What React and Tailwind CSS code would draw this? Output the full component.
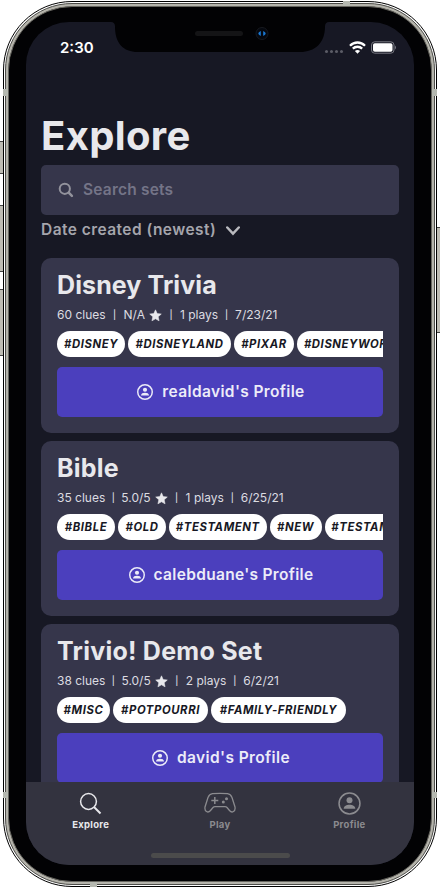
import React from "react";

const star = "M12 1.500l3.100 7 7.600.8-5.700 5.100 1.600 7.500L12 18.100l-6.600 3.800 1.600-7.500L1.300 9.300l7.600-.8z";

function Star() {
  return (
    <svg className="ml-1 mr-[3px] h-[13px] w-[13px] shrink-0" viewBox="0 0 24 24" fill="#e8e8ec" stroke="#e8e8ec" strokeWidth="1">
      <path d={star} />
    </svg>
  );
}

function UserCircle({ className, thin }) {
  return (
    <svg className={className} viewBox="0 0 24 24" fill="none" stroke="currentColor">
      <circle cx="12" cy="12" r="10.900" strokeWidth={thin ? 1.6 : 2.2} />
      <circle cx="12" cy="8.700" r="3.100" fill="currentColor" stroke="none" />
      <path d="M5.900 17.400c.3-3 3-4.100 6.100-4.100s5.800 1.100 6.100 4.100z" fill="currentColor" stroke="none" />
    </svg>
  );
}

function Card({ title, titleClass, clues, rating, ratingClass, plays, date, tags, user, userClass }) {
  return (
    <section className="h-[175px] shrink-0 rounded-[10px] bg-[#36364b] px-4 pt-3">
      <h2 className={"h-8 whitespace-nowrap text-[25px] leading-[31px] font-bold text-[#e8e8ec] " + titleClass}>{title}</h2>
      <div className="mt-[5px] flex h-4 items-center whitespace-pre text-[12px] text-[#dcdce1]">
        <span>{clues} clues</span>
        <span className={"w-[4px] text-center text-[9px] font-medium " + ratingClass}>|</span>
        <span>{rating}</span>
        <Star />
        <span className="ml-1 mr-[7px] w-[4px] text-center text-[9px] font-medium">|</span>
        <span>{plays} plays</span>
        <span className="mx-[6.500px] w-[4px] text-center text-[9px] font-medium">|</span>
        <span>{date}</span>
      </div>
      <div className="mt-2 flex h-[26px] gap-[3px] overflow-hidden">
        {tags.map(([tag, w], i) => (
          <span
            key={i}
            style={{ width: w }}
            className="flex shrink-0 items-center justify-center rounded-full bg-white pt-px text-[11.300px] font-bold tracking-[0.600px] italic text-[#171824]"
          >
            {tag}
          </span>
        ))}
      </div>
      <button className="mt-[10px] flex h-[50px] w-full items-center justify-center gap-[9px] rounded-[5px] bg-[#4b3fbd] pl-[2px] text-[15.500px] font-semibold text-[#ececf8]">
        <UserCircle className="h-4 w-4" />
        <span className={userClass}>{user}'s Profile</span>
      </button>
    </section>
  );
}

export default function App() {
  return (
    <div className="relative h-[888px] w-[440px] overflow-hidden bg-white font-['Inter',sans-serif]">
      <div className="absolute left-[-1px] top-[141px] h-[33px] w-[5px] border border-[#444] bg-[#bdbbb3]" />
      <div className="absolute left-[-1px] top-[205px] h-[67px] w-[5px] border border-[#444] bg-[#bdbbb3]" />
      <div className="absolute left-[-1px] top-[289px] h-[67px] w-[5px] border border-[#444] bg-[#bdbbb3]" />
      <div className="absolute right-[-1px] top-[227px] h-[106px] w-[5px] border border-[#444] bg-[#bdbbb3]" />
      <div className="absolute left-[3px] top-[1px] h-[886px] w-[434px] rounded-[69px] border border-black bg-white p-px">
        <div className="h-full rounded-[67px] border border-[#4c4c48] bg-[#b5b4ac] p-[2px]">
          <div className="h-full rounded-[64px] border border-[#66655f] bg-[#020204] px-[17px] pb-[16px] pt-[15px]">
            <main className="relative flex h-full flex-col overflow-hidden rounded-[43px] bg-[#171824]">
              <header className="flex h-[97px] shrink-0 justify-between pl-[34px] pr-[17px] pt-[16px] text-white">
                <time className="text-[15px] leading-[19px] font-semibold">2:30</time>
                <div className="flex h-[18px] items-center">
                  <div className="mr-[6px] mt-[9px] flex gap-[2px]">
                    {[0, 1, 2, 3].map((i) => <i key={i} className="h-[3px] w-[3px] rounded-full bg-[#5b5c66]" />)}
                  </div>
                  <svg className="h-[13px] w-[17px]" viewBox="0 0 17 13" fill="none" stroke="white" strokeWidth="2.300">
                    <path d="M1 4.700c4.200-4.300 10.800-4.300 15 0M3.800 7.700c2.700-2.600 6.700-2.600 9.400 0" />
                    <path d="M5.900 10c1.400-1.300 3.800-1.300 5.200 0L8.500 12.700z" fill="white" stroke="none" />
                  </svg>
                  <svg className="ml-[5px] h-[13px] w-[26px]" viewBox="0 0 26 13" fill="none">
                    <rect x=".5" y=".8" width="22.500" height="11.400" rx="3.200" stroke="#777881" />
                    <rect x="2" y="2.300" width="19.500" height="8.400" rx="1.800" fill="white" />
                    <path d="M24 4.500q2 2 0 4z" fill="#777881" />
                  </svg>
                </div>
              </header>
              <div className="flex min-h-0 flex-1 flex-col px-[15px]">
                <h1 className="h-[46px] shrink-0 text-[40px] leading-[34px] font-bold tracking-[0.350px] text-[#e8e8ec]">Explore</h1>
                <label className="flex h-[50px] shrink-0 items-center gap-[9px] rounded-[5px] bg-[#36364b] pl-[17px] text-[15.500px] font-semibold tracking-[0.200px] text-[#747487]">
                  <svg className="h-4 w-4" viewBox="0 0 16 16" fill="none" stroke="#92929c" strokeWidth="2" strokeLinecap="round">
                    <circle cx="6.800" cy="6.800" r="5.100" />
                    <path d="M10.700 10.700l3.200 3.200" strokeWidth="2.500" />
                  </svg>
                  <span>Search sets</span>
                </label>
                <div className="flex h-[43px] shrink-0 items-start gap-[10px] pt-[5px] text-[15.500px] leading-[20px] font-semibold text-[#a5a5ac]">
                  <span className="tracking-[0.450px]">Date created (newest)</span>
                  <svg className="mt-[6px] h-[10px] w-[14px]" viewBox="0 0 14 10" fill="none" stroke="#b9b9be" strokeWidth="2.500" strokeLinecap="round">
                    <path d="M1.300 1.500L7 7.700l5.700-6.200" />
                  </svg>
                </div>
                <div className="flex flex-col gap-2">
                  <Card title="Disney Trivia" titleClass="tracking-[0.100px]" clues="60" rating="N/A" ratingClass="mx-[7px]" plays="1" date="7/23/21" user="realdavid" userClass="tracking-[0.370px]"
                    tags={[["#DISNEY", 68], ["#DISNEYLAND", 103], ["#PIXAR", 60], ["#DISNEYWORLD", 113]]} />
                  <Card title="Bible" titleClass="tracking-[0.250px]" clues="35" rating="5.0/5" ratingClass="mx-[6px]" plays="1" date="6/25/21" user="calebduane" userClass="tracking-[0.320px]"
                    tags={[["#BIBLE", 58], ["#OLD", 48], ["#TESTAMENT", 97.5], ["#NEW", 52], ["#TESTAMENT", 97.5]]} />
                  <Card title="Trivio! Demo Set" titleClass="tracking-[0.250px]" clues="38" rating="5.0/5" ratingClass="mx-[6px]" plays="2" date="6/2/21" user="david" userClass="tracking-[0.400px]"
                    tags={[["#MISC", 53], ["#POTPOURRI", 95], ["#FAMILY-FRIENDLY", 135]]} />
                </div>
              </div>
              <nav className="absolute inset-x-0 bottom-0 grid h-[83px] grid-cols-3 bg-[#33333f] pt-[10px] text-[9.500px] font-bold tracking-[0.300px] text-[#8b8b8f]">
                <div className="flex flex-col items-center gap-[3px] text-[#e8e8ec]">
                  <svg className="h-[23px] w-[23px]" viewBox="0 0 23 23" fill="none" stroke="currentColor" strokeWidth="1.500">
                    <circle cx="9.500" cy="9.500" r="7.900" /><path d="M15 15l6.500 6.500" strokeWidth="2" />
                  </svg>
                  Explore
                </div>
                <div className="flex flex-col items-center gap-[3px]">
                  <svg className="h-[23px] w-[32px]" viewBox="0 0 32 23" fill="none" stroke="currentColor" strokeWidth="1.300">
                    <path d="M8.500 1.700Q16 .9 23.500 1.700C26 2 27 3 28 5.500L31 15C31.700 19.500 28 21.500 25.500 18.500L23 15.500Q22.300 14.700 21 14.700H11Q9.700 14.700 9 15.500L6.500 18.500C4 21.500.3 19.500 1 15L4 5.500C5 3 6 2 8.500 1.700z" />
                    <path d="M10.800 5v7M7.300 8.500h7" strokeWidth="1.500" />
                    <g fill="currentColor" stroke="none"><circle cx="22.500" cy="6.700" r="1.500" /><circle cx="19.300" cy="9.900" r="1.500" /></g>
                  </svg>
                  Play
                </div>
                <div className="flex flex-col items-center gap-[3px]">
                  <UserCircle thin className="h-[23px] w-[23px]" />
                  Profile
                </div>
                <i className="absolute bottom-[7px] left-[125px] h-[5px] w-[139px] rounded-full bg-[#4b4b4b]" />
              </nav>
            </main>
          </div>
        </div>
      </div>
      <i className="absolute left-[3px] top-[89px] h-[7px] w-[5px] bg-[#b5b8b0]" />
      <i className="absolute left-[3px] top-[792px] h-[6px] w-[5px] bg-[#b5b8b0]" />
      <i className="absolute left-[432px] top-[89px] h-[7px] w-[5px] bg-[#b5b8b0]" />
      <i className="absolute left-[432px] top-[792px] h-[6px] w-[5px] bg-[#b5b8b0]" />
      <i className="absolute left-[343px] top-[1px] h-[5px] w-[7px] bg-[#b5b8b0]" />
      <i className="absolute left-[90px] top-[882px] h-[5px] w-[7px] bg-[#b5b8b0]" />
      <svg className="absolute left-[110px] top-[18px] h-[36px] w-[220px]" viewBox="0 0 220 36">
        <path d="M0 0h220v4h-1q-4 0-4 4.500C215 25 205 34 190 34H28C13 34 5 25 5 8.500Q5 4 1 4H0z" fill="#020204" />
        <rect x="85" y="13" width="48" height="5" rx="2.500" fill="#141416" />
        <circle cx="152" cy="15.500" r="6" fill="#05080f" stroke="#17191f" />
        <path d="M150.800 13q-5 2.500 0 5zM153.200 13q5 2.500 0 5z" fill="#1a78d2" />
      </svg>
    </div>
  );
}
